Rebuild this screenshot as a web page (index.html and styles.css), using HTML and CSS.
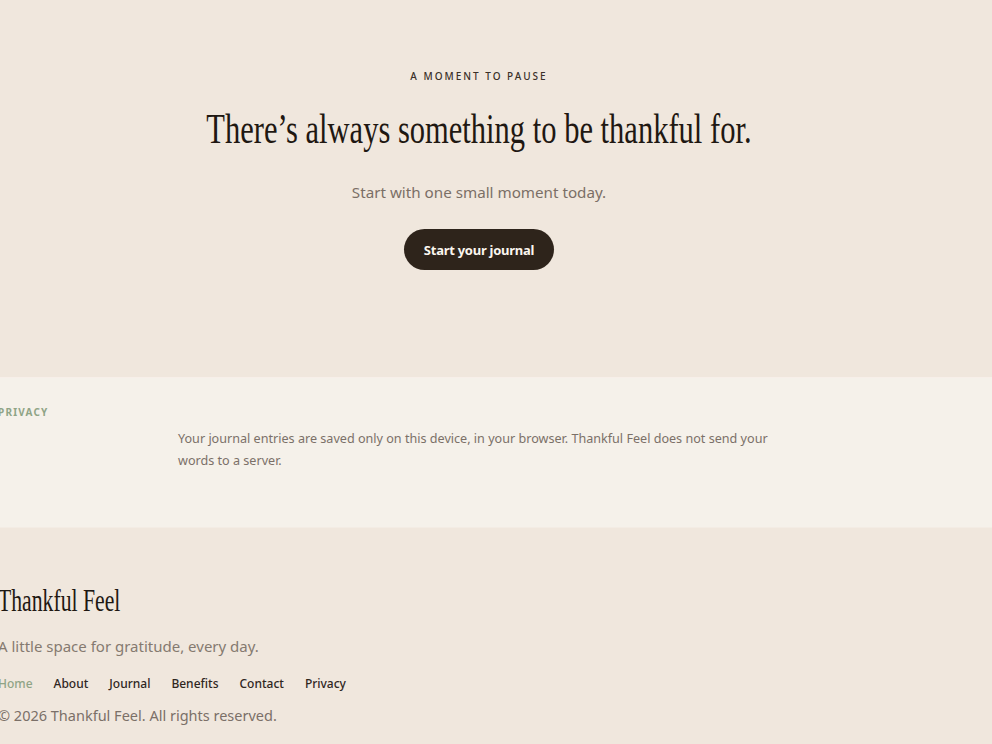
FILE: index.html
```html
<!DOCTYPE html>
<html lang="en">
<head>
<meta charset="utf-8">
<title>Thankful Feel</title>
<link rel="stylesheet" href="styles.css">
</head>
<body>
<section class="hero">
  <div class="wrap hero-inner">
    <p class="eyebrow">A MOMENT TO PAUSE</p>
    <h1 class="hero-title"><span class="squeeze">There’s always something to be thankful for.</span></h1>
    <p class="hero-sub">Start with one small moment today.</p>
    <a class="btn" href="#">Start your journal</a>
  </div>
</section>
<section class="privacy">
  <div class="wrap privacy-inner">
    <p class="label">PRIVACY</p>
    <p class="privacy-text">Your journal entries are saved only on this device, in your browser. Thankful Feel does not send your words to a server.</p>
  </div>
</section>
<footer class="footer">
  <div class="wrap footer-inner">
    <p class="brand"><span class="squeeze">Thankful Feel</span></p>
    <p class="tagline">A little space for gratitude, every day.</p>
    <nav class="nav">
      <a class="active" href="#">Home</a>
      <a href="#">About</a>
      <a href="#">Journal</a>
      <a href="#">Benefits</a>
      <a href="#">Contact</a>
      <a href="#">Privacy</a>
    </nav>
    <p class="copy">© 2026 Thankful Feel. All rights reserved.</p>
  </div>
</footer>
</body>
</html>
```
FILE: styles.css
```css
html, body {
  margin: 0;
  padding: 0;
  background: #f0e7dd;
  font-family: "Noto Sans", "Open Sans", sans-serif;
  overflow: hidden;
}
p { margin: 0; }
a { text-decoration: none; }

.wrap {
  width: 962px;
  margin-left: -2px;
  box-sizing: border-box;
}

.hero {
  background: #f0e7dd;
  height: 377px;
}
.hero-inner {
  display: flex;
  flex-direction: column;
  align-items: center;
  padding-top: 69px;
}
.eyebrow {
  font-size: 10px;
  letter-spacing: 0.2em;
  color: #3a3028;
  font-weight: 500;
  line-height: 14px;
}
.hero-title {
  margin: 22px 0 0;
  font-family: "Liberation Serif", serif;
  font-weight: 400;
  font-size: 43px;
  line-height: 48px;
  color: #1f1812;
  white-space: nowrap;
}
.squeeze {
  display: inline-block;
  transform: scaleX(0.71);
  transform-origin: center;
}
.hero-sub {
  margin-top: 28px;
  font-size: 15.2px;
  line-height: 22px;
  color: #7b6f66;
}
.btn {
  margin-top: 26px;
  display: inline-flex;
  align-items: center;
  justify-content: center;
  width: 150px;
  height: 41px;
  box-sizing: border-box;
  border-radius: 21px;
  background: #2e241b;
  color: #fbf6ef;
  font-size: 13px;
  font-weight: 700;
  letter-spacing: -0.02em;
}

.privacy {
  background: #f5f1ea;
  border-top: 1px solid #f7efe9;
  height: 150px;
  box-sizing: border-box;
}
.privacy-inner {
  display: grid;
  grid-template-columns: 180px 605px;
  grid-template-rows: auto auto;
  padding-top: 27px;
}
.label {
  grid-column: 1 / 3;
  font-size: 10px;
  font-weight: 700;
  letter-spacing: 0.12em;
  color: #8fa486;
  line-height: 14px;
}
.privacy-text {
  grid-column: 2;
  margin-top: 9px;
  font-size: 12.6px;
  line-height: 22px;
  color: #7b7068;
}

.footer {
  background: #f0e7dd;
  border-top: 1px solid #f3ece4;
}
.footer-inner {
  padding-top: 55px;
  display: flex;
  flex-direction: column;
  align-items: flex-start;
}
.brand {
  font-family: "Liberation Serif", serif;
  font-size: 31px;
  line-height: 36px;
  color: #1f1812;
  white-space: nowrap;
}
.brand .squeeze {
  transform-origin: left center;
  transform: scaleX(0.7);
}
.tagline {
  margin-top: 16px;
  font-size: 15px;
  line-height: 22px;
  color: #857a70;
}
.nav {
  margin-top: 19px;
  display: flex;
  gap: 21px;
}
.nav a {
  font-size: 12px;
  font-weight: 500;
  color: #2f261e;
  line-height: 16px;
}
.nav a.active {
  color: #8fa486;
}
.copy {
  margin-top: 13px;
  font-size: 14.5px;
  line-height: 20px;
  color: #7b7068;
}
```
